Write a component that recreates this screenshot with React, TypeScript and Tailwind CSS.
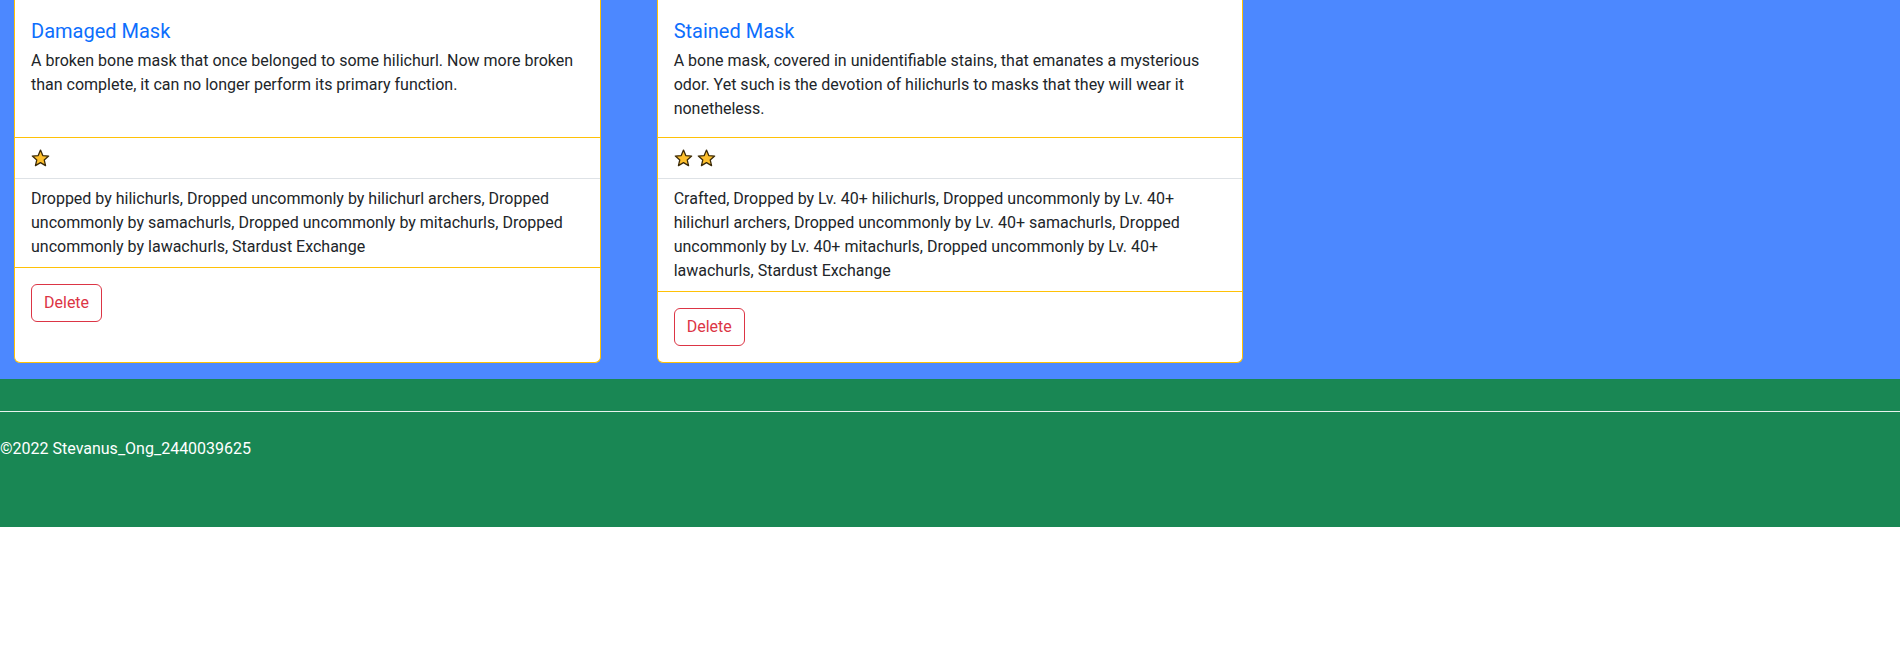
import React from "react";

const Star = () => (
  <svg width="19" height="18" viewBox="0 0 19 18" className="block">
    <path
      d="M9.5 1.1 L11.79 6.54 L17.68 7.04 L13.21 10.91 L14.55 16.66 L9.5 13.6 L4.45 16.66 L5.79 10.91 L1.32 7.04 L7.21 6.54 Z"
      fill="#fdbf2d"
      stroke="#3b2a08"
      strokeWidth="1.3"
      strokeLinejoin="round"
    />
  </svg>
);

type Item = {
  name: string;
  desc: string;
  stars: number;
  sources: string;
};

const items: Item[] = [
  {
    name: "Damaged Mask",
    desc: "A broken bone mask that once belonged to some hilichurl. Now more broken than complete, it can no longer perform its primary function.",
    stars: 1,
    sources:
      "Dropped by hilichurls, Dropped uncommonly by hilichurl archers, Dropped uncommonly by samachurls, Dropped uncommonly by mitachurls, Dropped uncommonly by lawachurls, Stardust Exchange",
  },
  {
    name: "Stained Mask",
    desc: "A bone mask, covered in unidentifiable stains, that emanates a mysterious odor. Yet such is the devotion of hilichurls to masks that they will wear it nonetheless.",
    stars: 2,
    sources:
      "Crafted, Dropped by Lv. 40+ hilichurls, Dropped uncommonly by Lv. 40+ hilichurl archers, Dropped uncommonly by Lv. 40+ samachurls, Dropped uncommonly by Lv. 40+ mitachurls, Dropped uncommonly by Lv. 40+ lawachurls, Stardust Exchange",
  },
];

function Card({ item }: { item: Item }) {
  return (
    <div className="flex flex-col bg-white border border-t-0 border-[#ffc107] rounded-b-[6px]">
      <div className="flex-auto px-4 pt-[19px] pb-4">
        <h5 className="text-[20px] leading-[24px] text-[#0d6efd] mb-[6px]">{item.name}</h5>
        <p className="text-[16px] leading-[24px] text-[#212529]">{item.desc}</p>
      </div>
      <ul className="border-y border-[#ffc107]">
        <li className="px-4 py-2 border-b border-[#dee2e6] flex gap-1 h-[41px] items-center">
          {Array.from({ length: item.stars }).map((_, i) => (
            <Star key={i} />
          ))}
        </li>
        <li className="px-4 py-2 text-[16px] leading-[24px] text-[#212529]">{item.sources}</li>
      </ul>
      <div className="flex-auto p-4">
        <button className="border border-[#dc3545] text-[#dc3545] rounded-[6px] px-3 py-[6px] text-[16px] leading-[24px]">
          Delete
        </button>
      </div>
    </div>
  );
}

export default function App() {
  return (
    <div
      className="min-h-[648px] bg-white"
      style={{ fontFamily: 'Roboto, "Liberation Sans", sans-serif' }}
    >
      <section className="bg-[#4c88ff] px-[14px] pb-4">
        <div className="grid grid-cols-3 gap-x-[56px]">
          {items.map((it) => (
            <Card key={it.name} item={it} />
          ))}
        </div>
      </section>
      <footer className="bg-[#198754] pt-[32px] pb-[66px] text-white">
        <hr className="border-0 border-t border-white/90" />
        <p className="mt-[25px] text-[16px] leading-[24px]">©2022 Stevanus_Ong_2440039625</p>
      </footer>
    </div>
  );
}
